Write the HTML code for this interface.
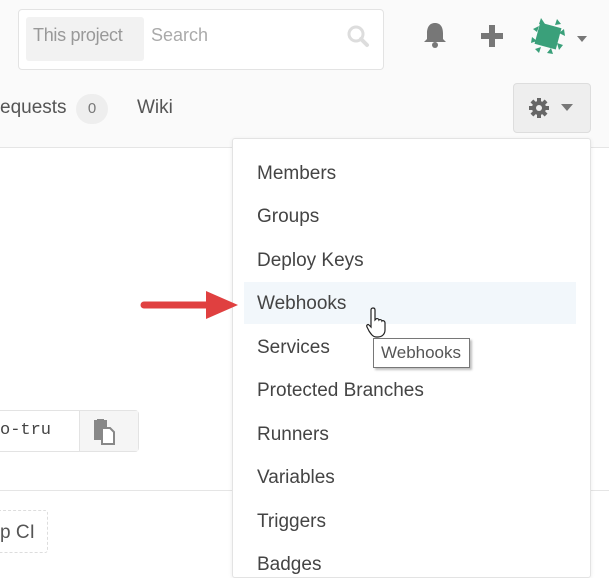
<!DOCTYPE html>
<html><head><style>
*{margin:0;padding:0;box-sizing:border-box}
body{width:609px;height:565px;overflow:hidden;background:#fff;font-family:"Liberation Sans",sans-serif;position:relative;color:#555}
.top{position:absolute;left:0;top:0;width:609px;height:148px;background:#fafafa;border-bottom:1px solid #e5e5e5}
.abs{position:absolute}
.item{position:absolute;left:257px;font-size:19px;color:#444}
</style></head><body>
<div class="top"></div>
<div class="abs" style="left:18px;top:9px;width:366px;height:61px;background:#fff;border:1px solid #e3e3e3;border-radius:4px"></div>
<div class="abs" style="left:26px;top:17px;width:118px;height:44px;background:#f2f2f2;border-radius:3px"></div>
<div class="abs" style="left:33px;top:25px;font-size:18px;color:#999;letter-spacing:-0.3px">This project</div>
<div class="abs" style="left:151px;top:25px;font-size:18px;color:#aaa">Search</div>
<svg class="abs" style="left:346px;top:24px" width="24" height="24" viewBox="0 0 24 24"><circle cx="10" cy="10" r="7" fill="none" stroke="#ddd" stroke-width="3"/><path d="M15 15l6 6" stroke="#ddd" stroke-width="4" stroke-linecap="round"/></svg>
<svg class="abs" style="left:420px;top:20px" width="30" height="30" viewBox="0 0 30 30"><path d="M15 3c-6 0-8 5-8 10v6l-3 3h22l-3-3v-6c0-5-2-10-8-10z" fill="#777"/><circle cx="15" cy="25" r="3" fill="#777"/></svg>
<svg class="abs" style="left:480px;top:24px" width="24" height="24"><rect x="9" y="1" width="6" height="22" fill="#777"/><rect x="1" y="9" width="22" height="6" fill="#777"/></svg>
<svg class="abs" style="left:527px;top:15px" width="42" height="42" viewBox="0 0 42 42"><rect x="10" y="10" width="22" height="22" fill="#3aa07a" transform="rotate(15 21 21)"/><path d="M6 14l6-3-2 6zM14 3l4 6-6 0zM30 4l-2 6 6-1zM37 14l-5 4 6 3zM36 30l-6-2 2 7zM26 39l-2-6-4 5zM12 38l2-6-6 2zM4 28l6-2-5-4z" fill="#3aa07a"/></svg>
<svg class="abs" style="left:577px;top:36px" width="10" height="6"><path d="M0 0h10L5 6z" fill="#777"/></svg>
<div class="abs" style="left:0;top:97px;font-size:19px;color:#555">equests</div>
<div class="abs" style="left:76px;top:94px;width:32px;height:30px;border-radius:15px;background:#eee;font-size:15px;color:#777;text-align:center;line-height:30px">0</div>
<div class="abs" style="left:137px;top:97px;font-size:19px;color:#555">Wiki</div>
<div class="abs" style="left:513px;top:83px;width:78px;height:50px;background:#eee;border:1px solid #ddd;border-radius:4px"></div>
<svg class="abs" style="left:527px;top:96px" width="24" height="24" viewBox="0 0 24 24"><g fill="#666"><circle cx="12" cy="12" r="7"/><rect x="10" y="2" width="4" height="20"/><rect x="2" y="10" width="20" height="4"/><rect x="10" y="2" width="4" height="20" transform="rotate(45 12 12)"/><rect x="10" y="2" width="4" height="20" transform="rotate(-45 12 12)"/></g><circle cx="12" cy="12" r="3" fill="#eee"/></svg>
<svg class="abs" style="left:561px;top:104px" width="12" height="7"><path d="M0 0h12L6 7z" fill="#777"/></svg>
<div class="abs" style="left:0;top:490px;width:609px;height:1px;background:#e5e5e5"></div>
<div class="abs" style="left:-5px;top:410px;width:144px;height:42px;border:1px solid #e3e3e3;border-radius:4px;background:#fff"></div>
<div class="abs" style="left:79px;top:411px;width:59px;height:40px;background:#f5f5f5;border-left:1px solid #e3e3e3"></div>
<div class="abs" style="left:0;top:421px;font-family:'Liberation Mono',monospace;font-size:17px;color:#444">o-tru</div>
<svg class="abs" style="left:93px;top:419px" width="26" height="26" viewBox="0 0 26 26"><rect x="1" y="1" width="13" height="20" fill="#888"/><rect x="4" y="0" width="7" height="4" fill="#888"/><path d="M9 9h8l4 4v12H9z" fill="#fff" stroke="#888" stroke-width="2"/></svg>
<div class="abs" style="left:-5px;top:510px;width:53px;height:43px;border:1px dashed #ddd;border-radius:3px"></div>
<div class="abs" style="left:0;top:522px;font-size:19px;color:#555">p CI</div>
<div class="abs" style="left:232px;top:138px;width:359px;height:440px;background:#fff;border:1px solid #e3e3e3;border-radius:3px;box-shadow:0 1px 4px rgba(0,0,0,.08)"></div>
<div class="abs" style="left:244px;top:282px;width:332px;height:42px;background:#f2f7fb"></div>
<div class="item" style="top:163px">Members</div>
<div class="item" style="top:206px">Groups</div>
<div class="item" style="top:250px">Deploy Keys</div>
<div class="item" style="top:293px">Webhooks</div>
<div class="item" style="top:337px">Services</div>
<div class="item" style="top:380px">Protected Branches</div>
<div class="item" style="top:424px">Runners</div>
<div class="item" style="top:467px">Variables</div>
<div class="item" style="top:511px">Triggers</div>
<div class="item" style="top:554px">Badges</div>
<svg class="abs" style="left:140px;top:288px" width="98" height="34"><path d="M4 17h68" stroke="#e04040" stroke-width="7" stroke-linecap="round"/><path d="M66 3l32 14-32 14z" fill="#e04040"/></svg>
<svg class="abs" style="left:366px;top:306px" width="26" height="34" viewBox="0 0 26 34"><path d="M7 2c1.5 0 2 1 2 2v10l1-1c1-1 3 0 3 1 1-1 3 0 3 1 1-1 3 0 3 2v7c0 4-3 7-7 7h-2c-3 0-5-3-7-6l-2-4c-1-2 1-3 2-2l2 2V4c0-1 .5-2 2-2z" fill="#fff" stroke="#222" stroke-width="1.2"/></svg>
<div class="abs" style="left:373px;top:338px;width:97px;height:30px;background:#fff;border:1px solid #777;box-shadow:2px 2px 2px rgba(0,0,0,.25);font-size:17px;color:#555;padding:4px 0 0 7px">Webhooks</div>
</body></html>
